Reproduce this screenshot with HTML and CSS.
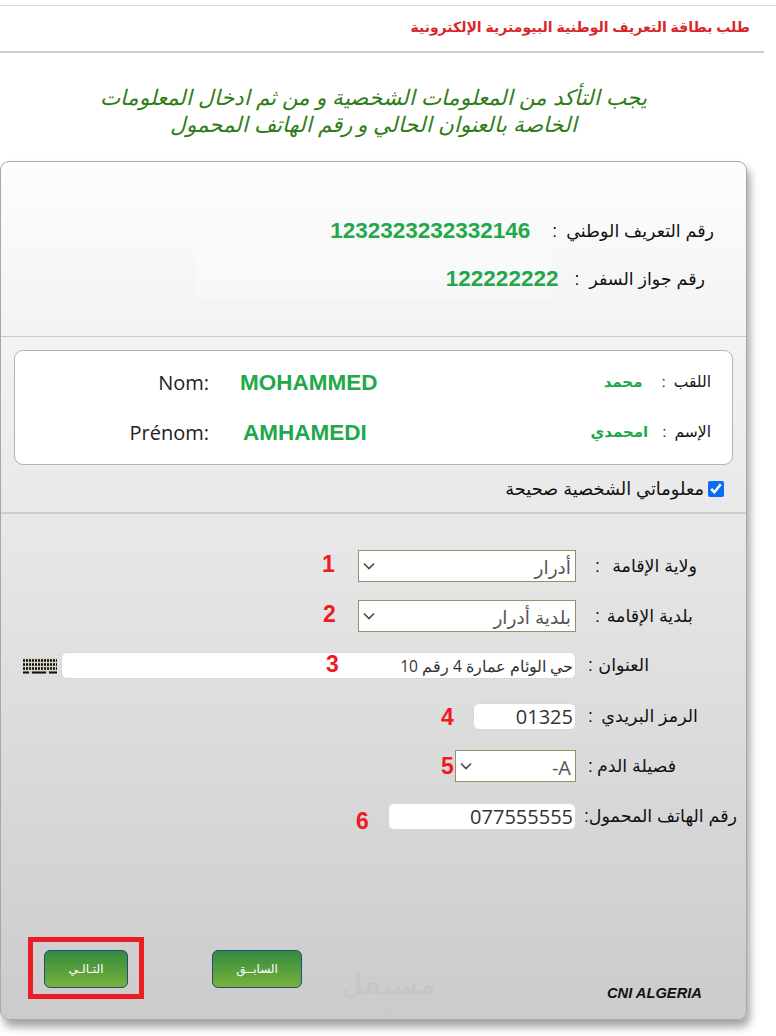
FILE: index.html
```html
<!DOCTYPE html>
<html lang="ar" dir="rtl">
<head>
<meta charset="utf-8">
<title>طلب بطاقة التعريف الوطنية البيومترية الإلكترونية</title>
<link rel="stylesheet" href="styles.css">
</head>
<body>
<div class="page">
  <header class="page-head">
    <h1>طلب بطاقة التعريف الوطنية البيومترية الإلكترونية</h1>
  </header>
  <p class="notice">يجب التأكد من المعلومات الشخصية و من ثم ادخال المعلومات<br>الخاصة بالعنوان الحالي و رقم الهاتف المحمول</p>
  <main class="card">
    <section class="ids">
      <div class="id-row id-nin"><span class="lbl">رقم التعريف الوطني</span><span class="colon">:</span><b class="val" dir="ltr">1232323232332146</b></div>
      <div class="id-row id-pass"><span class="lbl">رقم جواز السفر</span><span class="colon">:</span><b class="val" dir="ltr">122222222</b></div>
    </section>
    <section class="names">
      <div class="name-row">
        <div class="name-ar"><span class="lbl">اللقب</span><span class="colon">:</span><b class="val-ar lqb">محمد</b></div>
        <div class="name-fr" dir="ltr"><span class="fr-lbl">Nom:</span><b class="val mohammed">MOHAMMED</b></div>
      </div>
      <div class="name-row">
        <div class="name-ar"><span class="lbl">الإسم</span><span class="colon">:</span><b class="val-ar">امحمدي</b></div>
        <div class="name-fr" dir="ltr"><span class="fr-lbl">Prénom:</span><b class="val amhamedi">AMHAMEDI</b></div>
      </div>
    </section>
    <label class="confirm"><input type="checkbox" checked><span>معلوماتي الشخصية صحيحة</span></label>
    <section class="form">
      <div class="row r-wilaya"><span class="f-lbl">ولاية الإقامة<i>:</i></span>
        <div class="select s-wide"><span>أدرار</span><svg viewBox="0 0 12 8"><path d="M1 1.5l5 5 5-5"/></svg></div>
        <em class="mark m1">1</em></div>
      <div class="row r-baladia"><span class="f-lbl">بلدية الإقامة<i>:</i></span>
        <div class="select s-wide"><span>بلدية أدرار</span><svg viewBox="0 0 12 8"><path d="M1 1.5l5 5 5-5"/></svg></div>
        <em class="mark m2">2</em></div>
      <div class="row r-addr"><span class="f-lbl">العنوان<i>:</i></span>
        <div class="input i-addr">حي الوئام عمارة 4 رقم 10</div>
        <svg class="kbd" viewBox="0 0 34 16"><rect width="34" height="16" fill="#d6d2bf"/><path d="M0 2.500h34M0 6.500h34M0 10.500h34" stroke="#111" stroke-width="2.600" stroke-dasharray="2 1"/><path d="M0 14.500h6M9 14.500h14M26 14.500h8" stroke="#111" stroke-width="1.800"/></svg>
        <em class="mark m3">3</em></div>
      <div class="row r-post"><span class="f-lbl">الرمز البريدي<i>:</i></span>
        <div class="input i-post">01325</div>
        <em class="mark m4">4</em></div>
      <div class="row r-blood"><span class="f-lbl">فصيلة الدم<i>:</i></span>
        <div class="select s-blood"><span>A-</span><svg viewBox="0 0 12 8"><path d="M1 1.5l5 5 5-5"/></svg></div>
        <em class="mark m5">5</em></div>
      <div class="row r-phone"><span class="f-lbl">رقم الهاتف المحمول:</span>
        <div class="input i-phone">077555555</div>
        <em class="mark m6">6</em></div>
    </section>
    <footer class="actions" dir="ltr">
      <div class="frame"><button class="btn btn-next" type="button">التـالـي</button></div>
      <button class="btn btn-prev" type="button">السابــق</button>
      <div class="wm"><span class="wm-ar">مستقل</span><span class="wm-en">mostaql.com</span></div>
      <span class="brand">CNI ALGERIA</span>
    </footer>
  </main>
</div>
</body>
</html>
```
FILE: styles.css
```css
* { box-sizing: border-box; }
html, body { margin: 0; background: #fff; }
body { font-family: "Liberation Sans", "DejaVu Sans", sans-serif; color: #111; }
.page { width: 776px; height: 1036px; overflow: hidden; padding-top: 5px; }
.page-head { border-top: 1px solid #ddd; height: 48px; display: flex; align-items: center; position: relative; }
.page-head::after { content: ""; position: absolute; left: 0; width: 764px; bottom: 0; height: 2px; background: #ccc; }
h1 { margin: 0 26px 5px 0; font-size: 14px; font-weight: bold; color: #d9262a; }
.notice { margin: 32px 29px 0 0; width: 747px; height: 76px; text-align: center; font-size: 21.5px; line-height: 27px; font-style: italic; color: #2f7d18; }
.card { margin-right: 29px; width: 747px; height: 859px; border: 1px solid #a8a8a8; border-radius: 9px; background: linear-gradient(#fdfdfd, #cbcbcb); box-shadow: 3px 7px 8px rgba(0,0,0,.36); }
.ids { height: 175px; border-bottom: 1px solid #c8c8c8; padding-top: 52px; }
.id-row { display: flex; align-items: center; height: 34px; font-size: 17.5px; }
.id-nin { padding-right: 32px; }
.id-nin .colon { margin: 0 9px 0 22px; }
.id-pass { margin-top: 2px; height: 48px; padding: 10px 41px 0 0; background: linear-gradient(to left, transparent 194px, rgba(255,255,255,.25) 194px, rgba(255,255,255,.25) 551px, transparent 551px); }
.id-pass .colon { margin: 0 10px 0 16px; }
.colon { font-weight: normal; }
.val { color: #22a84a; font-size: 22.5px; font-weight: bold; }
.names { margin: 13px 13px 0 14px; height: 115px; background: #fff; border: 1px solid #b4b4b4; border-radius: 9px; padding-top: 6px; width: 719px; }
.name-row { display: flex; height: 50px; align-items: center; justify-content: space-between; font-size: 15.5px; }
.name-ar { display: flex; align-items: center; padding-right: 21px; }
.name-ar .colon { margin: 0 8px; }
.val-ar { color: #22a84a; font-size: 15px; margin-right: 6px; }
.lqb { margin-right: 11px; }
.name-fr { display: flex; width: 400px; align-items: baseline; margin-right: auto; }
.fr-lbl { font-family: "Open Sans", "Noto Sans", sans-serif; font-size: 20px; width: 194px; flex: none; text-align: right; color: #222; }
.mohammed { margin-left: 31px; }
.amhamedi { margin-left: 34px; }
.confirm { display: flex; align-items: center; height: 47px; padding-right: 22px; font-size: 17.8px; }
.confirm input { margin: 0 0 0 4px; width: 16px; height: 16px; accent-color: #0a6cf5; }
.form { border-top: 2px solid #cdcdcd; padding-top: 36px; height: 412px; }
.row { display: flex; align-items: center; position: relative; height: 27px; }
.r-wilaya, .r-baladia, .r-blood { height: 32px; }
.r-baladia { margin-top: 18px; }
.r-addr { margin-top: 20px; }
.r-post { margin-top: 24px; }
.r-blood { margin-top: 20px; }
.r-phone { margin-top: 21px; }
.f-lbl { width: 170px; flex: none; padding-right: 49px; font-size: 17.5px; white-space: nowrap; display: flex; justify-content: space-between; align-items: center; }
.f-lbl i { font-style: normal; margin-left: 12px; }
.r-wilaya .f-lbl i, .r-baladia .f-lbl i { margin-left: 19px; }
.r-baladia .f-lbl { padding-right: 53px; }
.r-addr .f-lbl { padding-right: 97px; }
.r-post .f-lbl { padding-right: 48px; }
.r-blood .f-lbl { padding-right: 70px; }
.r-phone .f-lbl { padding-right: 9px; }
.select { height: 32px; background: #fff; border: 1px solid #94906a; display: flex; align-items: center; justify-content: space-between; padding: 3px 4px 0 4px; font-size: 18.5px; color: #555; }
.select svg { width: 12px; height: 8px; fill: none; stroke: #5a4048; stroke-width: 1.6; margin-top: -3px; }
.s-wide { width: 218px; }
.s-blood { width: 121px; font-family: "Open Sans", sans-serif; font-size: 20px; }
.input { height: 27px; background: #fff; border: 1px solid #d8d8d8; border-radius: 6px; display: flex; align-items: center; padding: 0 2px; font-family: "Open Sans", sans-serif; font-size: 20px; color: #333; }
.i-addr { width: 515px; font-size: 15.5px; }
.i-post { width: 103px; }
.i-phone { width: 188px; }
.kbd { width: 34px; height: 16px; margin-right: 4px; }
.mark { position: absolute; font-style: normal; font-weight: bold; font-size: 23px; color: #ed1c24; line-height: 26px; top: 50%; transform: translateY(-50%); }
.m1 { left: 321px; top: calc(50% - 2px); }
.m2 { left: 322px; top: calc(50% - 2px); }
.m3 { left: 325px; top: calc(50% - 2px); }
.m4 { left: 440px; }
.m5 { left: 440px; }
.m6 { left: 355px; top: calc(50% + 4px); }
.actions { position: relative; height: 104px; }
.frame { position: absolute; left: 27px; top: 13px; width: 116px; height: 62px; border: 5px solid #ed1c24; padding: 8px 11px; }
.btn { height: 38px; border: 1px solid #1c4e80; border-radius: 6px; background: linear-gradient(#338a3e, #78b13b); color: #fff; font-size: 12px; font-family: "DejaVu Sans", sans-serif; padding: 0; }
.btn-next { width: 84px; display: block; }
.btn-prev { position: absolute; left: 211px; top: 26px; width: 90px; }
.brand { position: absolute; left: 606px; top: 61px; font-size: 14.7px; font-weight: bold; font-style: italic; color: #111; }
.wm { position: absolute; left: 337px; top: 46px; width: 100px; text-align: center; color: rgba(0,0,0,.035); }
.wm-ar { display: block; font-size: 26px; font-weight: bold; line-height: 30px; }
.wm-en { display: block; font-size: 11px; letter-spacing: 1px; }
```
